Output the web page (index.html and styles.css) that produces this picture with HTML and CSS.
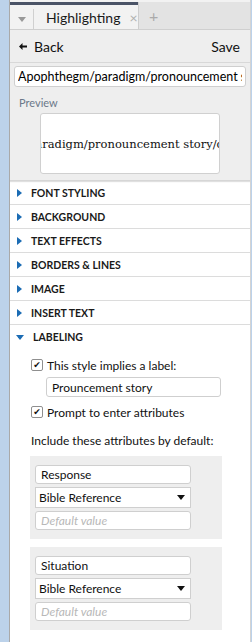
FILE: index.html
```html
<!DOCTYPE html>
<html lang="en">
<head>
  <meta charset="UTF-8">
  <title>Highlighting</title>
  <link rel="stylesheet" href="styles.css">
</head>
<body>
  <div class="panel">
    <div class="tabbar">
      <div class="tab-group">
        <div class="tab-menu"><span class="tri-down gray"></span></div>
        <div class="tab active">Highlighting <span class="tab-close">&times;</span></div>
      </div>
      <div class="tab-add">+</div>
    </div>

    <div class="top">
      <div class="header">
        <span class="back">
          <svg class="back-arrow" width="8" height="7" viewBox="0 0 8 7"><path d="M0 3.5 L3.5 0 L3.5 2.5 L8 2.5 L8 4.5 L3.5 4.5 L3.5 7 Z" fill="#111"/></svg>
          Back
        </span>
        <span class="save">Save</span>
      </div>
      <input class="name-input" type="text" value="Apophthegm/paradigm/pronouncement story">
      <div class="preview-label">Preview</div>
      <div class="preview">
        <span>Apophthegm/paradigm/pronouncement story/chreia/anecdote</span>
      </div>
    </div>

    <div class="section"><span class="tri-right"></span>FONT STYLING</div>
    <div class="section"><span class="tri-right"></span>BACKGROUND</div>
    <div class="section"><span class="tri-right"></span>TEXT EFFECTS</div>
    <div class="section"><span class="tri-right"></span>BORDERS &amp; LINES</div>
    <div class="section"><span class="tri-right"></span>IMAGE</div>
    <div class="section"><span class="tri-right"></span>INSERT TEXT</div>
    <div class="section open"><span class="tri-down blue"></span>LABELING</div>

    <div class="labeling">
      <div class="check"><span class="box">&#x2714;</span>This style implies a label:</div>
      <input class="text-input label-input" type="text" value="Prouncement story">
      <div class="check"><span class="box">&#x2714;</span>Prompt to enter attributes</div>
      <div class="include">Include these attributes by default:</div>

      <div class="attr">
        <input class="text-input" type="text" value="Response">
        <div class="select">Bible Reference <span class="tri-down black"></span></div>
        <input class="text-input" type="text" placeholder="Default value">
      </div>

      <div class="attr">
        <input class="text-input" type="text" value="Situation">
        <div class="select">Bible Reference <span class="tri-down black"></span></div>
        <input class="text-input" type="text" placeholder="Default value">
      </div>
    </div>
  </div>
</body>
</html>
```

FILE: styles.css
```css
html, body {
  margin: 0;
  height: 100%;
}

body {
  background: #bcd2ea;
  font-family: Lato, "Open Sans", sans-serif;
  color: #111;
  font-size: 12px;
}

.panel {
  margin-left: 9px;
  width: 240px;
  min-height: 100%;
  background: #fff;
  border-left: 1px solid #a9a9a9;
  border-right: 1px solid #d4d4d4;
  overflow: hidden;
}

/* tab bar */
.tabbar {
  display: flex;
  height: 29px;
  background: #f2f2f2;
  border-bottom: 1px solid #cfcfcf;
}

.tab-group {
  display: flex;
  margin-top: 2px;
  border-top: 3px solid #4a5366;
  width: 128px;
}

.tab-menu {
  width: 23px;
  display: flex;
  justify-content: center;
  align-items: center;
  border-right: 1px solid #d0d0d0;
  margin-top: 4px;
}

.tab {
  flex: 1;
  display: flex;
  align-items: center;
  padding-left: 12px;
  font-size: 14px;
  color: #1a1a1a;
}

.tab-close {
  color: #b0b0b0;
  font-size: 14px;
  margin-left: 9px;
}

.tab-add {
  flex: 1;
  margin-top: 2px;
  background: #e3e3e3;
  border-left: 1px solid #cdcdcd;
  color: #aaa;
  font-size: 16px;
  padding-left: 10px;
  display: flex;
  align-items: center;
}

/* triangles */
.tri-down {
  display: inline-block;
  width: 0;
  height: 0;
  border-left: 4px solid transparent;
  border-right: 4px solid transparent;
  border-top: 5px solid #999;
}

.tri-down.blue {
  border-top-color: #1b6cb4;
  margin: 0 9px 0 6px;
}

.tri-down.black {
  border-top-color: #111;
}

.tri-right {
  display: inline-block;
  width: 0;
  height: 0;
  border-top: 4px solid transparent;
  border-bottom: 4px solid transparent;
  border-left: 5px solid #1b6cb4;
  margin: 0 9px 0 7px;
}

/* top area */
.top {
  background: #eeeeee;
  padding: 0 4px 6px 4px;
  border-bottom: 1px solid #d6d6d6;
  box-shadow: 0 1px 1px #e0e0e0;
}

.header {
  display: flex;
  justify-content: space-between;
  align-items: center;
  height: 32px;
  margin: 0 -4px 3px;
  padding: 0 10px 0 9px;
  border-bottom: 1px solid #d8d8d8;
  font-size: 14px;
}

.back {
  display: flex;
  align-items: center;
}

.back-arrow {
  margin-right: 7px;
}

.name-input {
  box-sizing: border-box;
  width: 232px;
  height: 21px;
  border: 1px solid #cfcfcf;
  border-radius: 3px;
  font-family: inherit;
  font-size: 12.5px;
  padding: 0 3px;
  margin: 0;
  color: #000;
}

.preview-label {
  color: #6b7889;
  font-size: 11px;
  margin: 9px 0 4px 5px;
}

.preview {
  margin-left: 26px;
  width: 180px;
  height: 61px;
  box-sizing: border-box;
  background: #fff;
  border: 1px solid #d0d0d0;
  border-radius: 3px;
  display: flex;
  justify-content: center;
  align-items: center;
  overflow: hidden;
  white-space: nowrap;
  font-family: "DejaVu Serif", serif;
  font-size: 11.5px;
}

/* sections */
.section {
  height: 23px;
  display: flex;
  align-items: center;
  border-bottom: 1px solid #dcdcdc;
  font-size: 10.5px;
  font-weight: bold;
  color: #1a1a1a;
}

.section.open {
  border-bottom: none;
  height: 24px;
}

.labeling {
  padding: 7px 0 0 21px;
}

.check {
  display: flex;
  align-items: center;
  height: 18px;
}

.box {
  box-sizing: border-box;
  width: 12px;
  height: 12px;
  border: 1px solid #8f8f8f;
  border-radius: 2px;
  background: #fff;
  margin-right: 4px;
  display: flex;
  justify-content: center;
  align-items: center;
  font-size: 9px;
  line-height: 1;
  color: #111;
  font-family: "DejaVu Sans", sans-serif;
}

.text-input {
  box-sizing: border-box;
  display: block;
  width: 156px;
  height: 19px;
  border: 1px solid #cfcfcf;
  border-radius: 3px;
  font-family: inherit;
  font-size: 12px;
  padding: 0 5px;
  margin: 0;
  color: #111;
  background: #fff;
}

.text-input::placeholder {
  color: #b8b8b8;
  font-style: italic;
}

.label-input {
  width: 175px;
  height: 20px;
  margin: 3px 0 6px 15px;
}

.include {
  margin: 12px 0 8px 0;
}

.attr {
  width: 192px;
  box-sizing: border-box;
  background: #eeeeee;
  margin-left: -1px;
  padding: 9px 5px 9px;
  margin-bottom: 8px;
  display: flex;
  flex-direction: column;
  gap: 3px;
}

.select {
  box-sizing: border-box;
  width: 156px;
  height: 21px;
  background: #fff;
  border: 1px solid #cfcfcf;
  display: flex;
  justify-content: space-between;
  align-items: center;
  padding: 0 5px 0 3px;
}
```
